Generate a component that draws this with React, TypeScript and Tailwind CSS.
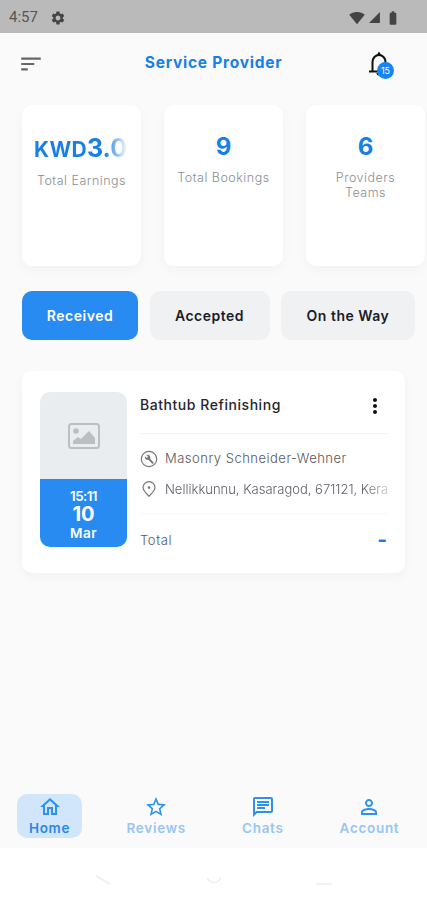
import {
  MdBatteryFull,
  MdMoreVert,
  MdOutlineChat,
  MdOutlineHome,
  MdPersonOutline,
  MdSettings,
  MdSignalCellular4Bar,
  MdSignalWifi4Bar,
  MdSort,
  MdStarOutline,
} from "react-icons/md";

const stats = [
  { label: "Total Bookings", value: "9", width: "w-[110px]" },
  { label: "Providers Teams", value: "6", width: "w-[80px]" },
];

const tabs = [
  { label: "Received", className: "w-[116px] bg-[#288bf1] text-white" },
  { label: "Accepted", className: "w-[120px] bg-[#eff1f2] text-[#1c1c28]" },
  { label: "On the Way", className: "w-[134px] bg-[#eff1f2] text-[#1c1c28]" },
  { label: "", className: "w-[100px] bg-[#eff1f2]" },
];

const navItems = [
  { label: "Home", Icon: MdOutlineHome, active: true },
  { label: "Reviews", Icon: MdStarOutline, active: false },
  { label: "Chats", Icon: MdOutlineChat, active: false },
  { label: "Account", Icon: MdPersonOutline, active: false },
];

function StatusBar() {
  return (
    <div className="flex h-[33px] items-center bg-[#bababa] pt-0.5 pr-[26px] pl-[9px] text-[#444]">
      <span className="font-[Roboto,sans-serif] text-[15px] text-[#555]">4:57</span>
      <MdSettings className="ml-3 size-4" />
      <div className="ml-auto flex items-center">
        <MdSignalWifi4Bar className="size-4" />
        <MdSignalCellular4Bar className="ml-[3px] size-[13px]" />
        <MdBatteryFull className="ml-1 size-4" />
      </div>
    </div>
  );
}

function BellIcon() {
  return (
    <svg viewBox="0 0 20 26" className="h-[26px] w-5 text-[#111]" fill="none" stroke="currentColor" strokeWidth="2">
      <path d="M3.500 20V11C3.500 7 6.500 4 10 4s6.500 3 6.500 7v9" />
      <path d="M0 20.500h20" />
      <path d="M10 0.500 12.500 4.500h-5Z" fill="currentColor" stroke="none" />
      <path d="M7.500 22h5a2.500 2.500 0 0 1-5 0Z" fill="currentColor" stroke="none" />
    </svg>
  );
}

function Header() {
  return (
    <header className="flex h-[72px] items-start justify-between pt-[17px] pr-[34px] pl-[18px]">
      <MdSort className="mt-[1px] size-[26px] text-[#666]" />
      <h1 className="ml-[14px] pt-px text-[15.5px] leading-6 font-bold tracking-[0.75px] text-[#167fe8]">
        Service Provider
      </h1>
      <div className="relative w-6 pt-px">
        <BellIcon />
        <span className="absolute top-[12px] left-[8px] flex size-[17px] items-center justify-center rounded-full bg-[#1684f2] text-[9px] text-white">
          15
        </span>
      </div>
    </header>
  );
}

function Stats() {
  const card = "h-[161px] w-[119px] shrink-0 rounded-[10px] bg-white text-center shadow-[0_4px_12px_rgba(0,0,0,0.035)]";
  const label = "text-[12.5px] leading-[15px] font-light tracking-[0.5px] text-[#8b8e94]";

  return (
    <section className="flex gap-[23px] pl-[22px]">
      <div className={card}>
        <div className="ml-3 w-[94px] overflow-hidden bg-gradient-to-r from-[#167fe8] from-75% to-[#167fe8]/0 bg-clip-text pt-[27px] text-left leading-[33px] whitespace-nowrap text-transparent">
          <span className="text-[21px] font-bold tracking-[0.3px]">KWD</span>
          <span className="text-[25px] font-bold">3.00</span>
        </div>
        <p className={`${label} mt-[5px]`}>Total Earnings</p>
      </div>
      {stats.map((stat) => (
        <div key={stat.label} className={card}>
          <div className="pt-[26px] text-[24px] leading-8 font-bold text-[#167fe8]">{stat.value}</div>
          <p className={`${label} mx-auto mt-[7px] ${stat.width}`}>{stat.label}</p>
        </div>
      ))}
    </section>
  );
}

function Tabs() {
  return (
    <div className="mt-[25px] flex gap-[11.5px] pl-[22px]">
      {tabs.map((tab) => (
        <button
          key={tab.label}
          className={`h-[49px] shrink-0 rounded-[10px] text-[14px] font-semibold tracking-[0.5px] ${tab.className}`}
        >
          {tab.label}
        </button>
      ))}
    </div>
  );
}

function WrenchIcon() {
  return (
    <svg viewBox="0 0 18 18" className="size-[18px] shrink-0 text-[#777]" fill="none" stroke="currentColor">
      <circle cx="9" cy="9" r="7.700" strokeWidth="1.200" />
      <path d="m8.500 8.500 4.200 4.300" strokeWidth="1.900" strokeLinecap="round" />
      <path d="M5 6.200 6.800 8l1.300-1.200-1.800-1.900c2-.9 4.500.5 4 3-.4 1.900-2.200 2.300-3.200 1.900C5.300 9.500 4.500 7.900 5 6.200Z" fill="currentColor" stroke="none" />
    </svg>
  );
}

function PinIcon() {
  return (
    <svg viewBox="0 0 18 18" className="size-[18px] shrink-0" fill="none" stroke="currentColor" strokeWidth="1.200">
      <path d="M9 16.200C5.500 13 3 10.500 3 7.600a6 6 0 0 1 12 0C15 10.500 12.500 13 9 16.200Z" />
      <circle cx="9" cy="7.600" r="1.300" fill="currentColor" stroke="none" />
    </svg>
  );
}

function Booking() {
  return (
    <section className="mx-[22px] mt-[31px] flex h-[202px] rounded-[10px] bg-white pt-[21px] pr-[14px] pl-[18px] shadow-[0_4px_12px_rgba(0,0,0,0.035)]">
      <div className="h-[155px] w-[87px] shrink-0 text-center text-white">
        <div className="flex h-[87px] items-center justify-center rounded-t-[10px] bg-[#e9edf0]">
          <svg viewBox="0 0 32 26" className="h-[26px] w-8 text-[#bcbebf]" fill="none">
            <rect x="1" y="1" width="30" height="24" rx="2.5" stroke="currentColor" strokeWidth="2" />
            <circle cx="8" cy="8" r="2.8" fill="currentColor" />
            <path d="M5 21v-3l5-4 3 2 8-8 6 7v6Z" fill="currentColor" />
          </svg>
        </div>
        <div className="h-[68px] rounded-b-[10px] bg-[#288bf1] pt-[9px] font-semibold">
          <div className="text-[13.5px] leading-[16px] tracking-[-0.6px]">15:11</div>
          <div className="text-[20px] leading-[21px] font-bold">10</div>
          <div className="text-[13.5px] leading-[17px] tracking-[0.5px]">Mar</div>
        </div>
      </div>

      <div className="ml-[13px] min-w-0 flex-1 text-[#555861]">
        <div className="mr-[3px] flex h-[42px] items-start justify-between border-b border-[#f3f3f3]">
          <h2 className="pt-[2px] text-[14px] leading-[22px] font-medium tracking-[0.55px] text-[#25252f]">
            Bathtub Refinishing
          </h2>
          <MdMoreVert className="mt-[2px] mr-[1px] size-6 text-[#111]" />
        </div>
        <div className="mr-[3px] flex h-[80px] flex-col justify-center gap-[11px] border-b border-[#f8f8f8] pt-px text-[13px] font-light">
          <div className="flex items-center gap-[7px]">
            <WrenchIcon />
            <span className="tracking-[0.5px]">Masonry Schneider-Wehner</span>
          </div>
          <div className="flex items-center gap-[7px] text-[#777]">
            <PinIcon />
            <span className="w-[223px] overflow-hidden bg-gradient-to-r from-[#555861] from-90% to-[#555861]/30 bg-clip-text whitespace-nowrap text-transparent">
              Nellikkunnu, Kasaragod, 671121, Kerala
            </span>
          </div>
        </div>
        <div className="flex items-center justify-between pt-[14px] pr-[4px] text-[13px]">
          <span className="font-light tracking-[0.6px]">Total</span>
          <span className="pb-0.5 text-[21px] leading-6 font-bold text-[#167fe8]">-</span>
        </div>
      </div>
    </section>
  );
}

function BottomNav() {
  return (
    <nav className="mt-auto flex h-[54px] justify-between pr-[25px] pl-[17px]">
      {navItems.map(({ label, Icon, active }) => (
        <a
          key={label}
          href="#"
          className={`flex h-[44px] w-[65px] flex-col items-center rounded-[10px] pt-[1px] ${
            active ? "bg-[#d2e6fb] text-[#2788e8]" : "text-[#98c5f4]"
          }`}
        >
          <Icon className="size-6 shrink-0 text-[#2c91f0]" />
          <span className="text-[13.5px] leading-[19px] font-semibold tracking-[0.7px]">{label}</span>
        </a>
      ))}
    </nav>
  );
}

function SystemBar() {
  return (
    <div className="h-[52px] bg-white">
      <svg viewBox="0 0 427 52" className="h-full w-full" fill="none" stroke="#eeeeee" strokeWidth="1.500">
        <path d="M96 28l14 8M207 30q7 9 14 0M316 36h16" />
      </svg>
    </div>
  );
}

export default function App() {
  return (
    <div className="flex h-[900px] w-[427px] flex-col overflow-hidden bg-[#fafafa] font-[Inter,'Liberation_Sans',sans-serif]">
      <StatusBar />
      <Header />
      <Stats />
      <Tabs />
      <Booking />
      <BottomNav />
      <SystemBar />
    </div>
  );
}
